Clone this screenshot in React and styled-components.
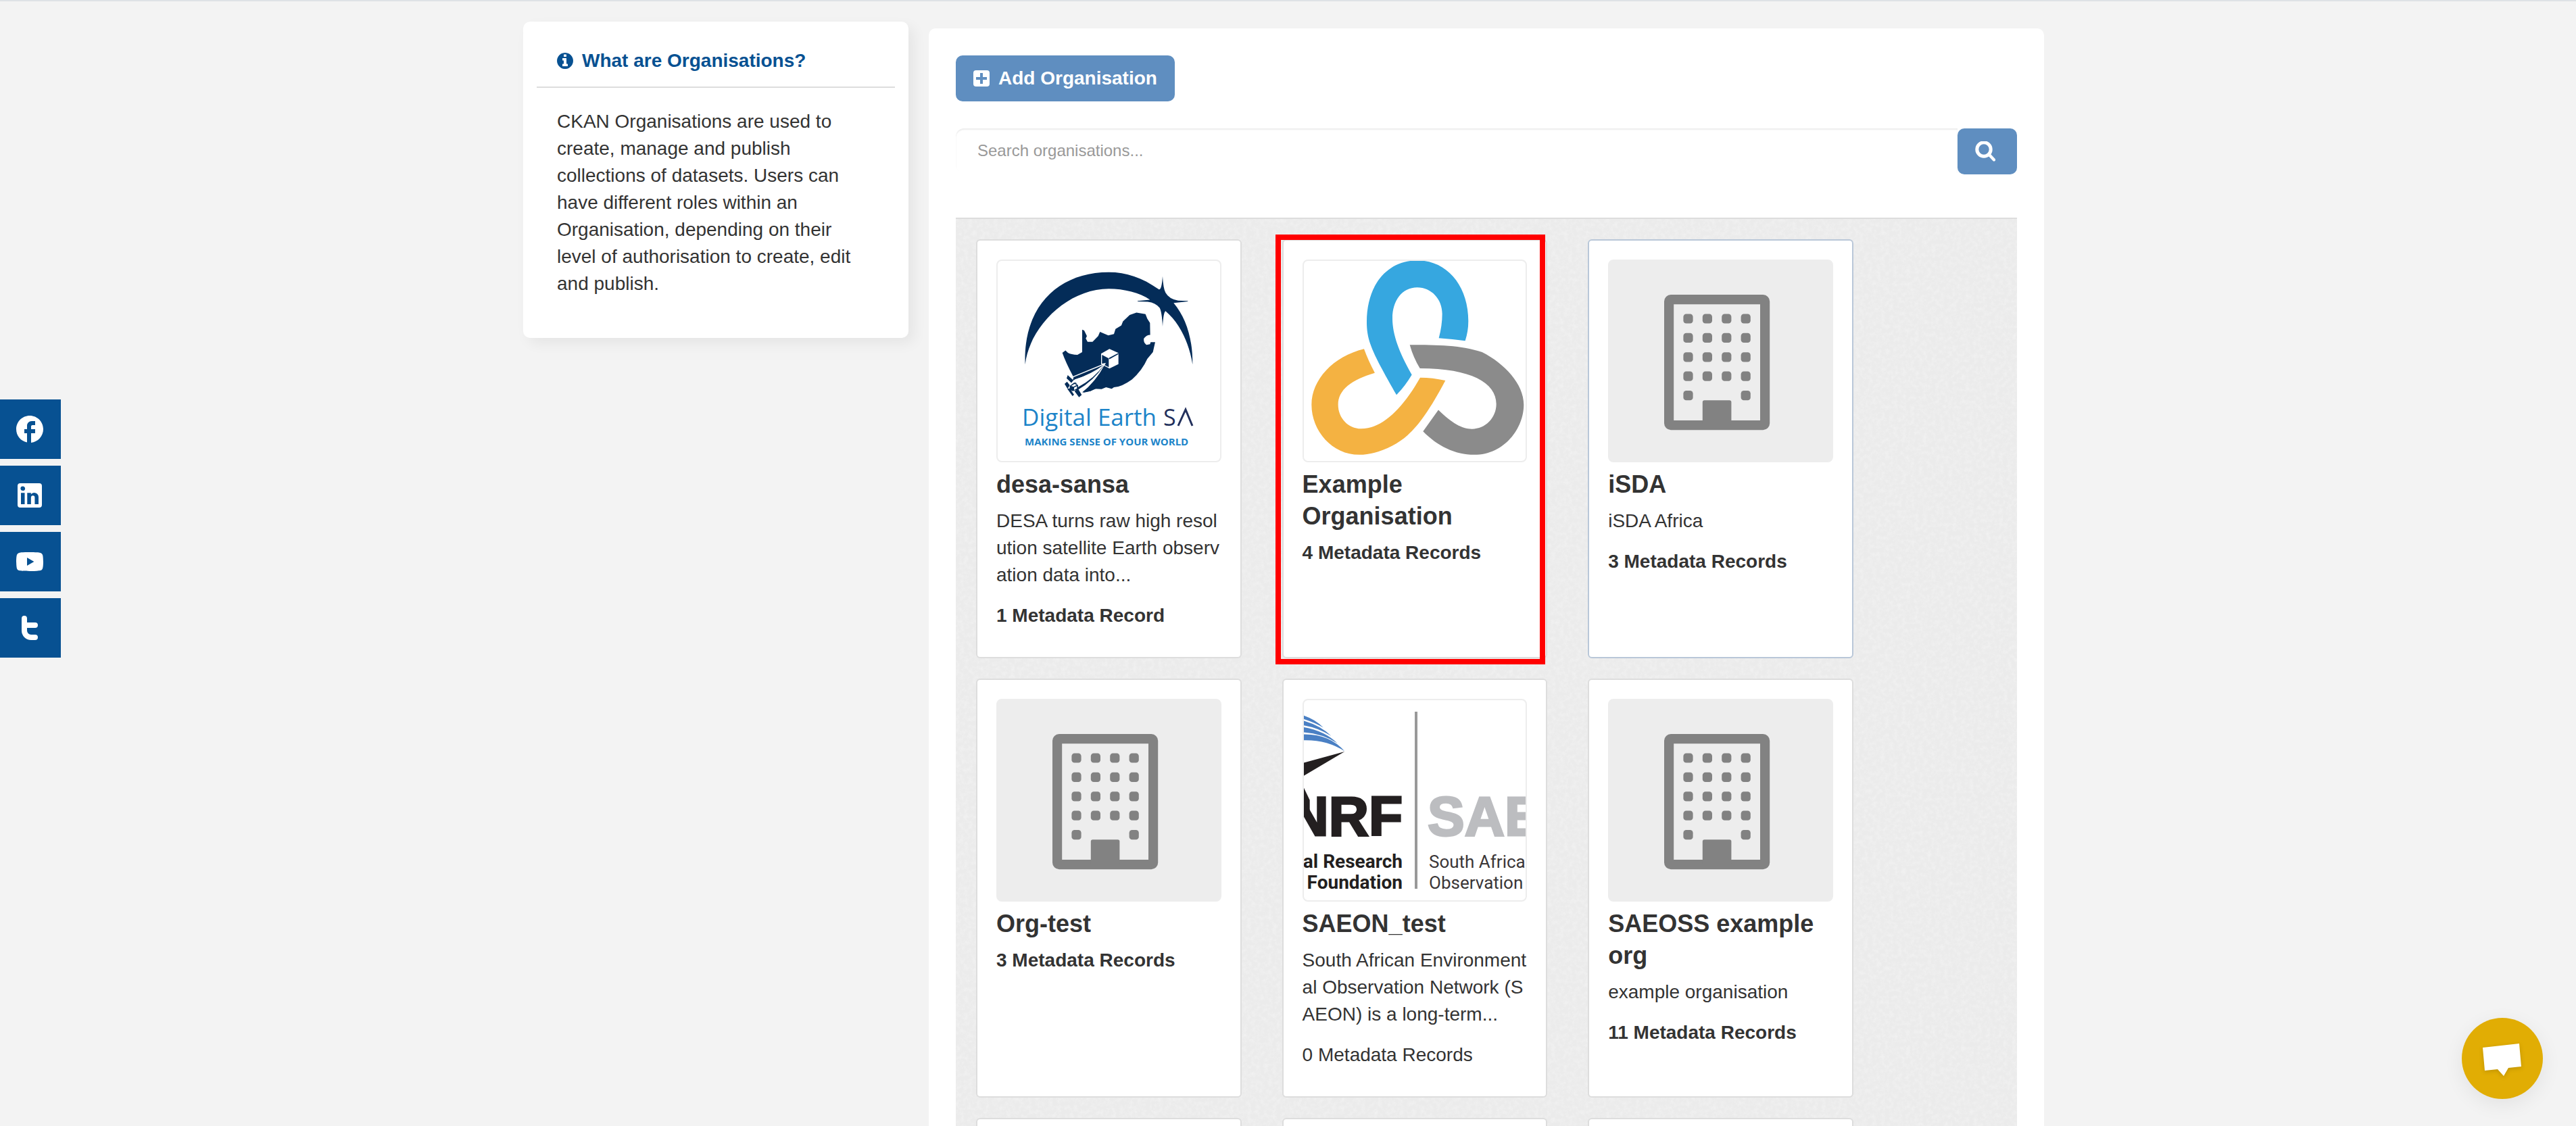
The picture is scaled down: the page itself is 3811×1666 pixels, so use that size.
import React from "react";
import styled, { createGlobalStyle } from "styled-components";

const GlobalStyle = createGlobalStyle`
  *, *::before, *::after { box-sizing: border-box; }
  body {
    margin: 0;
    background: #f3f3f3;
    color: #333;
    font-family: "Liberation Sans", Arial, sans-serif;
    font-size: 28px;
    line-height: 40px;
  }
  h1, h2, h3, p { margin: 0; }
`;

const Page = styled.div`
  height: 100vh;
  overflow: hidden;
  border-top: 2px solid #dee2e6;
  padding-right: 13px;
`;

const Container = styled.div`
  display: flex;
  align-items: flex-start;
  gap: 30px;
  width: 100%;
  max-width: 2250px;
  margin: 0 auto;
  padding-top: 30px;
`;

const Sidebar = styled.aside`
  flex: 0 0 570px;
  background: #fff;
  border-radius: 10px;
  box-shadow: 8px 8px 20px rgba(0, 0, 0, 0.06);
`;

const SidebarTitle = styled.h2`
  display: flex;
  align-items: center;
  gap: 13px;
  margin: 0 20px;
  padding: 38px 30px 18px;
  border-bottom: 2px solid #ddd;
  color: #075192;
  font-size: 28px;
  line-height: 40px;
`;

const SidebarText = styled.p`
  padding: 30px 50px 60px;
`;

const Main = styled.main`
  flex: 1;
  min-width: 0;
  margin-top: 10px;
  padding: 40px;
  background: #fff;
  border-radius: 10px;
`;

const AddButton = styled.button`
  display: inline-flex;
  align-items: center;
  gap: 13px;
  height: 68px;
  padding: 0 26px;
  border: 0;
  border-radius: 10px;
  background: #5f8ec0;
  color: #fff;
  font: bold 28px/40px "Liberation Sans", Arial, sans-serif;
`;

const SearchForm = styled.form`
  display: flex;
  align-items: flex-start;
  margin: 40px 0 64px;
`;

const SearchInput = styled.input`
  flex: 1;
  min-width: 0;
  height: 66px;
  padding: 0 32px;
  border: 0;
  border-radius: 12px 0 0 12px;
  background: #fff;
  box-shadow: inset 0 2px 2px rgba(0, 0, 0, 0.08);
  color: #333;
  font: 24px/34px "Liberation Sans", Arial, sans-serif;
  &::placeholder { color: #999; opacity: 1; }
`;

const SearchButton = styled.button`
  display: flex;
  align-items: center;
  width: 88px;
  height: 68px;
  padding: 0 26px;
  border: 0;
  border-radius: 10px;
  background: #5f8ec0;
`;

const Gallery = styled.section`
  position: relative;
  border-top: 2px solid #ddd;
  background: #ebebeb;
`;

const Texture = styled.svg`
  position: absolute;
  inset: 0;
  width: 100%;
  height: 100%;
`;

const CardGrid = styled.div`
  position: relative;
  display: grid;
  grid-template-columns: repeat(3, 26%);
  gap: 30px 60px;
  padding: 30px;
`;

const Card = styled.article`
  position: relative;
  min-height: 620px;
  padding: 28px;
  background: #fff;
  border: 2px solid ${(p) => (p.$active ? "#b9c7d8" : "#ddd")};
  border-radius: 6px;
`;

const Highlight = styled.span`
  position: absolute;
  inset: -9px 1px -11px -12px;
  border: 8px solid #f00;
`;

const Picture = styled.div`
  height: 300px;
  overflow: hidden;
  border: 2px solid #ededed;
  border-radius: 8px;
  background: ${(p) => (p.$grey ? "#ededed" : "#fff")};
  svg { display: block; margin: -2px; }
`;

const CardTitle = styled.h3`
  margin: 9px 0 11px;
  font-size: 36px;
  line-height: 47px;
`;

const Description = styled.p`
  margin-bottom: 20px;
  word-break: break-all;
`;

const Records = styled.p`
  font-weight: ${(p) => (p.$empty ? "normal" : "bold")};
`;

const SocialBar = styled.nav`
  position: fixed;
  left: 0;
  top: 591px;
  display: flex;
  flex-direction: column;
  gap: 10px;
`;

const SocialLink = styled.a`
  display: flex;
  align-items: center;
  width: 90px;
  height: 88px;
  padding-left: 20px;
  background: #075192;
  color: #fff;
`;

const ChatButton = styled.button`
  position: fixed;
  right: 49px;
  bottom: 40px;
  width: 120px;
  height: 120px;
  padding: 0;
  border: 0;
  border-radius: 50%;
  background: #e1ad04;
  box-shadow: 0 8px 30px rgba(0, 0, 0, 0.07);
  svg { display: block; filter: drop-shadow(0 2px 3px rgba(0, 0, 0, 0.15)); }
`;

const InfoIcon = () => (
  <svg width="24" height="24" viewBox="128 128 1536 1536" fill="currentColor" aria-hidden="true">
    <path d="M1152 1376v-160q0-14-9-23t-23-9h-96v-512q0-14-9-23t-23-9h-320q-14 0-23 9t-9 23v160q0 14 9 23t23 9h96v320h-96q-14 0-23 9t-9 23v160q0 14 9 23t23 9h448q14 0 23-9t9-23zM1024 480v-160q0-14-9-23t-23-9h-192q-14 0-23 9t-9 23v160q0 14 9 23t23 9h192q14 0 23-9t9-23zM1664 896q0 209-103 385.5t-279.5 279.5-385.5 103-385.5-103-279.5-279.5-103-385.5 103-385.5 279.5-279.5 385.5-103 385.5 103 279.5 279.5 103 385.5z" />
  </svg>
);

const PlusIcon = () => (
  <svg width="24" height="24" viewBox="0 0 24 24" aria-hidden="true">
    <rect width="24" height="24" rx="4" fill="#fff" />
    <path d="M12 4v16M4 12h16" stroke="#5f8ec0" strokeWidth="4" />
  </svg>
);

const SearchIcon = () => (
  <svg width="30" height="30" viewBox="0 0 30 30" aria-hidden="true">
    <circle cx="13" cy="12" r="10.2" fill="none" stroke="#fff" strokeWidth="5" />
    <path d="M21 20l7 7.4" stroke="#fff" strokeWidth="4.4" strokeLinecap="round" />
  </svg>
);

const BuildingLogo = () => (
  <svg width="332" height="300" viewBox="0 0 332 300" aria-hidden="true">
    <g transform="translate(83 52) scale(14.2)" fill="#828282">
      <rect x="0.5" y="0.5" width="10" height="13.1" rx="0.2" fill="none" stroke="#828282" />
      {[2, 4, 6, 8].map((y) =>
        [2, 4, 6, 8].map((x) => <rect key={`${x}-${y}`} x={x} y={y} width="1" height="1" rx="0.3" />)
      )}
      <rect x="2" y="10" width="1" height="1" rx="0.3" />
      <rect x="8" y="10" width="1" height="1" rx="0.3" />
      <rect x="4" y="11" width="3" height="2.6" rx="0.2" />
    </g>
  </svg>
);

const KnotLogo = () => (
  <svg width="332" height="300" viewBox="0 0 332 300" aria-hidden="true">
    <g transform="scale(0.3333 0.4337) translate(-173 -125)">
      <path fill="#36a7e0" d="M590 587C485 445 458 405 458 338C458 210 550 128 683 128C815 128 909 215 909 335Q909 370 895 402Q840 396 778 393Q793 350 793 310C793 260 745 220 682 220C615 220 572 265 572 325C572 380 600 440 658 518Q630 555 590 587Z" />
      <path fill="#f4b242" d="M446 430Q465 470 494 512C390 535 331 570 331 620C331 665 375 702 433 702C530 702 620 630 695 528Q750 528 807 538C740 635 690 690 640 724C585 762 500 791 425 791C305 791 213 710 213 620C213 535 310 455 446 430Z" />
      <path fill="#8b8b8b" d="M649 416C770 416 880 417 970 441C1070 480 1155 550 1155 620C1155 700 1070 791 935 791C850 791 770 760 708 711L776 638C835 682 880 703 925 703C985 703 1033 665 1033 618C1033 545 920 496 694 496Q665 460 649 416Z" />
    </g>
  </svg>
);

const DigitalEarthLogo = () => (
  <svg width="332" height="300" viewBox="0 0 332 300" role="img" aria-label="Digital Earth SA">
    <g transform="scale(0.3333 0.4337) translate(-223 -171)" fill="#042c58">
      <path d="M351 529C340 330 500 214 722 214C800 214 870 232 945 273Q957 275 961 228Q964 270 974 284Q990 306 1030 311L1073 312V314L1010 319C1065 370 1095 440 1094 529C1080 460 1040 390 974 347Q965 350 961 399Q958 350 948 336Q930 318 895 315L850 314V312L905 308C860 285 790 271 722 271C540 271 370 400 351 529Z" />
      <path d="M516 489L530 481L541 489Q555 495 583 496L604 487V410L613 413L625 432L620 440L628 452L650 452L675 432L683 418L720 430L745 425L752 408L778 396L785 382L815 360L845 352L885 357L893 373L905 387L906 428Q890 428 878 440Q875 455 890 462L905 460L908 453L928 453L918 487L893 510Q870 550 825 580Q780 605 745 607L735 612L710 607L690 613L660 612L640 620L600 627L564 570Q530 520 516 489Z" />
      <path fill="#fff" d="M708 524L553 573L530 600L560 645L604 628Q665 590 708 524Z" />
      <path d="M700 530L566 572L562 584Q650 560 700 530ZM698 535Q650 560 574 590L584 616Q655 585 698 535ZM702 534Q660 590 604 624L640 620L700 600Z" />
      <path fill="#fff" d="M700 531Q650 562 570 580L586 606Q660 575 700 531Z" />
      <path fill="#fff" d="M688 492L725 476L765 490V528L725 543L688 528Z" />
      <path d="M692 496L722 508V538L704 531L709 524L692 526ZM722 507L765 490V494L725 511Z" />
      <path d="M540 565L565 583L556 592L535 576ZM526 595L537 588L549 600L539 612ZM549 602L570 590L586 600L584 614L562 620L549 614ZM570 620L586 612L602 633L590 641ZM538 612L549 610L568 632L561 637Z" />
      <path fill="#fff" d="M555 602L570 595L580 599L566 605ZM568 608L581 603V611L568 616Z" />
    </g>
    <text x="38" y="246" fontFamily="Open Sans, sans-serif" fontSize="35" fill="#1c84c9">Digital Earth</text>
    <text x="247" y="246" fontFamily="Open Sans, sans-serif" fontSize="34" fill="#22305c">S</text>
    <path d="M269 246L280 222L290 246" fill="none" stroke="#22305c" strokeWidth="3" />
    <text x="42" y="275" fontFamily="Open Sans, sans-serif" fontSize="15" fontWeight="700" fill="#1c84c9">MAKING SENSE OF YOUR WORLD</text>
  </svg>
);

const NrfLogo = () => (
  <svg width="332" height="300" viewBox="0 0 332 300" role="img" aria-label="NRF SAEON">
    <clipPath id="nrf-frame"><rect x="2" y="2" width="328" height="296" /></clipPath>
    <g clipPath="url(#nrf-frame)">
      <g transform="scale(0.3333 0.4375) translate(-173 -123)">
        <path fill="#4a80c4" d="M173 178Q230 192 265 220Q225 202 173 190ZM173 196Q250 212 300 248Q240 220 173 212ZM173 218Q270 230 328 273Q260 240 173 236ZM173 243Q290 240 360 300Q280 260 173 263Z" />
        <path fill="#231f20" d="M360 301L173 340V386Z" />
        <path fill="#231f20" d="M173 415L205 465V530L173 505Z" />
      </g>
      <g fontFamily="Liberation Sans, Arial, sans-serif" fontSize="82" fontWeight="700" strokeWidth="3">
        <text x="148" y="202" textAnchor="end" fill="#231f20" stroke="#231f20">NRF</text>
        <text x="185" y="202" fill="#bcbdc0" stroke="#bcbdc0">SAE</text>
      </g>
      <rect x="166" y="19" width="4" height="262" fill="#999" />
      <g fontFamily="Roboto, sans-serif" fontSize="28" fontWeight="700" fill="#231f20" textAnchor="end">
        <text x="148" y="250">al Research</text>
        <text x="148" y="281">Foundation</text>
      </g>
      <g fontFamily="Roboto, sans-serif" fontSize="26" fill="#3a3637">
        <text x="187" y="250">South Africa</text>
        <text x="187" y="281">Observation</text>
      </g>
    </g>
  </svg>
);

const socials = [
  { name: "Facebook", box: 24, d: "M22 12c0-5.52-4.48-10-10-10S2 6.48 2 12c0 4.84 3.44 8.87 8 9.8V15H8v-3h2V9.5C10 7.57 11.57 6 13.5 6H16v3h-2c-.55 0-1 .45-1 1v2h3v3h-3v6.95c5.05-.5 9-4.76 9-9.95z" },
  { name: "LinkedIn", box: 24, d: "M19 3A2 2 0 0 1 21 5V19A2 2 0 0 1 19 21H5A2 2 0 0 1 3 19V5A2 2 0 0 1 5 3H19M18.5 18.5V13.2A3.26 3.26 0 0 0 15.24 9.94C14.39 9.94 13.4 10.46 12.92 11.24V10.13H10.13V18.5H12.92V13.57C12.92 12.8 13.54 12.17 14.31 12.17A1.4 1.4 0 0 1 15.71 13.57V18.5H18.5M6.88 8.56A1.68 1.68 0 0 0 8.56 6.88C8.56 5.95 7.81 5.19 6.88 5.19A1.69 1.69 0 0 0 5.19 6.88C5.19 7.81 5.95 8.56 6.88 8.56M8.27 18.5V10.13H5.5V18.5H8.27Z" },
  { name: "YouTube", box: 24, d: "M10,15L15.19,12L10,9V15M21.56,7.17C21.69,7.64 21.78,8.27 21.84,9.07C21.91,9.87 21.94,10.56 21.94,11.16L22,12C22,14.19 21.84,15.8 21.56,16.83C21.31,17.73 20.73,18.31 19.83,18.56C19.36,18.69 18.5,18.78 17.18,18.84C15.88,18.91 14.69,18.94 13.59,18.94L12,19C7.81,19 5.2,18.84 4.17,18.56C3.27,18.31 2.69,17.73 2.44,16.83C2.31,16.36 2.22,15.73 2.16,14.93C2.09,14.13 2.06,13.44 2.06,12.84L2,12C2,9.81 2.16,8.2 2.44,7.17C2.69,6.27 3.27,5.69 4.17,5.44C4.64,5.31 5.5,5.22 6.82,5.16C8.12,5.09 9.31,5.06 10.41,5.06L12,5C16.19,5 18.8,5.16 19.83,5.44C20.73,5.69 21.31,6.27 21.56,7.17Z" },
  { name: "Twitter", box: 48, d: "M16 6a4 4 0 0 1 4 4v6h12a4 4 0 0 1 0 8H20v4a6 6 0 0 0 6 6h6a4 4 0 0 1 0 8h-6a14 14 0 0 1-14-14V10a4 4 0 0 1 4-4z" },
];

const organisations = [
  { name: "desa-sansa", Logo: DigitalEarthLogo, text: "DESA turns raw high resolution satellite Earth observation data into...", records: 1 },
  { name: "Example Organisation", Logo: KnotLogo, records: 4, highlighted: true },
  { name: "iSDA", Logo: BuildingLogo, grey: true, text: "iSDA Africa", records: 3, active: true },
  { name: "Org-test", Logo: BuildingLogo, grey: true, records: 3 },
  { name: "SAEON_test", Logo: NrfLogo, text: "South African Environmental Observation Network (SAEON) is a long-term...", records: 0 },
  { name: "SAEOSS example org", Logo: BuildingLogo, grey: true, text: "example organisation", records: 11 },
];

function OrganisationCard({ org }) {
  const { name, Logo, grey, text, records, active, highlighted } = org;
  return (
    <Card $active={active}>
      <Picture $grey={grey}><Logo /></Picture>
      <CardTitle>{name}</CardTitle>
      {text && <Description>{text}</Description>}
      <Records $empty={records === 0}>{records} Metadata {records === 1 ? "Record" : "Records"}</Records>
      {highlighted && <Highlight />}
    </Card>
  );
}

export default function App() {
  return (
    <Page>
      <GlobalStyle />
      <Container>
        <Sidebar>
          <SidebarTitle><InfoIcon />What are Organisations?</SidebarTitle>
          <SidebarText>
            CKAN Organisations are used to create, manage and publish collections of datasets. Users can have
            different roles within an Organisation, depending on their level of authorisation to create, edit and
            publish.
          </SidebarText>
        </Sidebar>
        <Main>
          <AddButton type="button"><PlusIcon />Add Organisation</AddButton>
          <SearchForm onSubmit={(e) => e.preventDefault()}>
            <SearchInput type="text" aria-label="Search organisations" placeholder="Search organisations..." />
            <SearchButton type="submit" aria-label="Search"><SearchIcon /></SearchButton>
          </SearchForm>
          <Gallery>
            <Texture aria-hidden="true">
              <filter id="paper" x="0" y="0" width="100%" height="100%">
                <feTurbulence type="fractalNoise" baseFrequency="0.16" numOctaves="3" seed="4" />
                <feColorMatrix values="0 0 0 0 1  0 0 0 0 1  0 0 0 0 1  1.6 0 0 0 -0.6" />
              </filter>
              <rect width="100%" height="100%" filter="url(#paper)" opacity="0.35" />
            </Texture>
            <CardGrid>
              {organisations.map((org) => <OrganisationCard key={org.name} org={org} />)}
              <Card /><Card /><Card />
            </CardGrid>
          </Gallery>
        </Main>
      </Container>
      <SocialBar aria-label="Social media">
        {socials.map((s) => (
          <SocialLink key={s.name} href="#" aria-label={s.name}>
            <svg width="48" height="48" viewBox={`0 0 ${s.box} ${s.box}`} fill="currentColor" aria-hidden="true">
              <path d={s.d} />
            </svg>
          </SocialLink>
        ))}
      </SocialBar>
      <ChatButton type="button" aria-label="Open chat">
        <svg width="120" height="120" viewBox="0 0 120 120" aria-hidden="true">
          <path d="M31 44L85 38L88 72L69 74L62 86L53 76L34 78Z" fill="#fff" />
        </svg>
      </ChatButton>
    </Page>
  );
}
